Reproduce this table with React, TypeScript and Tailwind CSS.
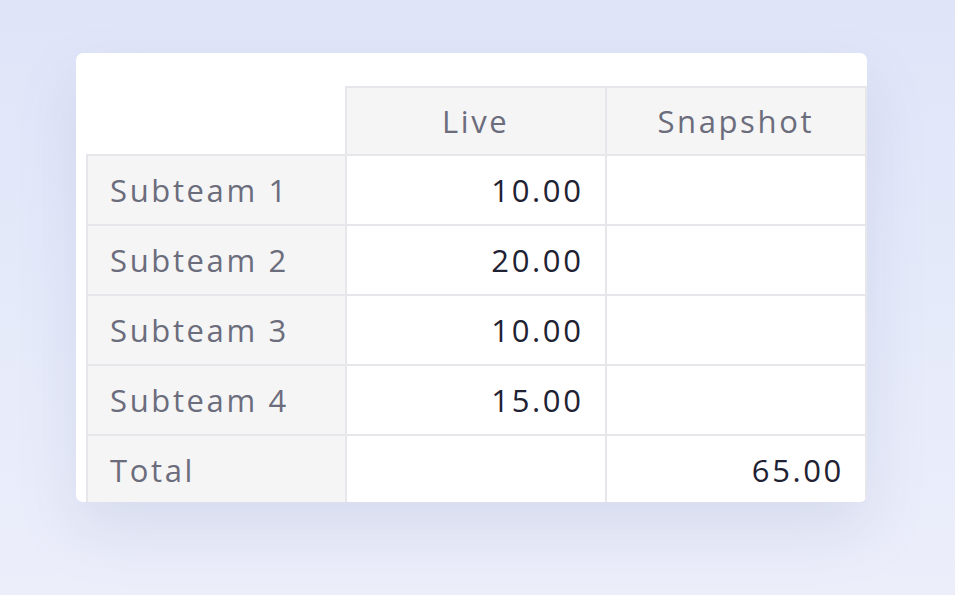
const rows = [
  { label: "Subteam 1", live: "10.00", snapshot: "" },
  { label: "Subteam 2", live: "20.00", snapshot: "" },
  { label: "Subteam 3", live: "10.00", snapshot: "" },
  { label: "Subteam 4", live: "15.00", snapshot: "" },
  { label: "Total", live: "", snapshot: "65.00" },
];

export default function App() {
  return (
    <div className="w-[955px] h-[595px] overflow-hidden bg-gradient-to-b from-[#dfe4f8] via-[#e5eafa] to-[#eceefa] pt-[53px] pl-[76px] font-['Open_Sans',sans-serif]">
      <div className="w-[791px] h-[449px] overflow-hidden rounded-[7px] bg-white shadow-[0_28px_60px_rgba(120,130,180,0.16)] pt-[33px] pl-[10px]">
        <table className="border-collapse table-fixed text-[31px] tracking-[0.085em]">
          <colgroup>
            <col className="w-[260px]" />
            <col className="w-[262px]" />
            <col className="w-[262px]" />
          </colgroup>
          <thead>
            <tr className="h-[68px]">
              <th className="border-0 p-0"></th>
              <th className="border-2 border-[#e7e7eb] bg-[#f5f5f5] font-normal text-[#6b6c7c] text-center">Live</th>
              <th className="border-2 border-[#e7e7eb] bg-[#f5f5f5] font-normal text-[#6b6c7c] text-center">Snapshot</th>
            </tr>
          </thead>
          <tbody>
            {rows.map((row) => (
              <tr key={row.label} className="h-[70px]">
                <td className="border-2 border-[#e7e7eb] bg-[#f5f5f5] text-[#6b6c7c] pl-[22px]">{row.label}</td>
                <td className="border-2 border-[#e7e7eb] text-[#1f2233] text-right pr-[21px]">{row.live}</td>
                <td className="border-2 border-[#e7e7eb] text-[#1f2233] text-right pr-[21px]">{row.snapshot}</td>
              </tr>
            ))}
          </tbody>
        </table>
      </div>
    </div>
  );
}
